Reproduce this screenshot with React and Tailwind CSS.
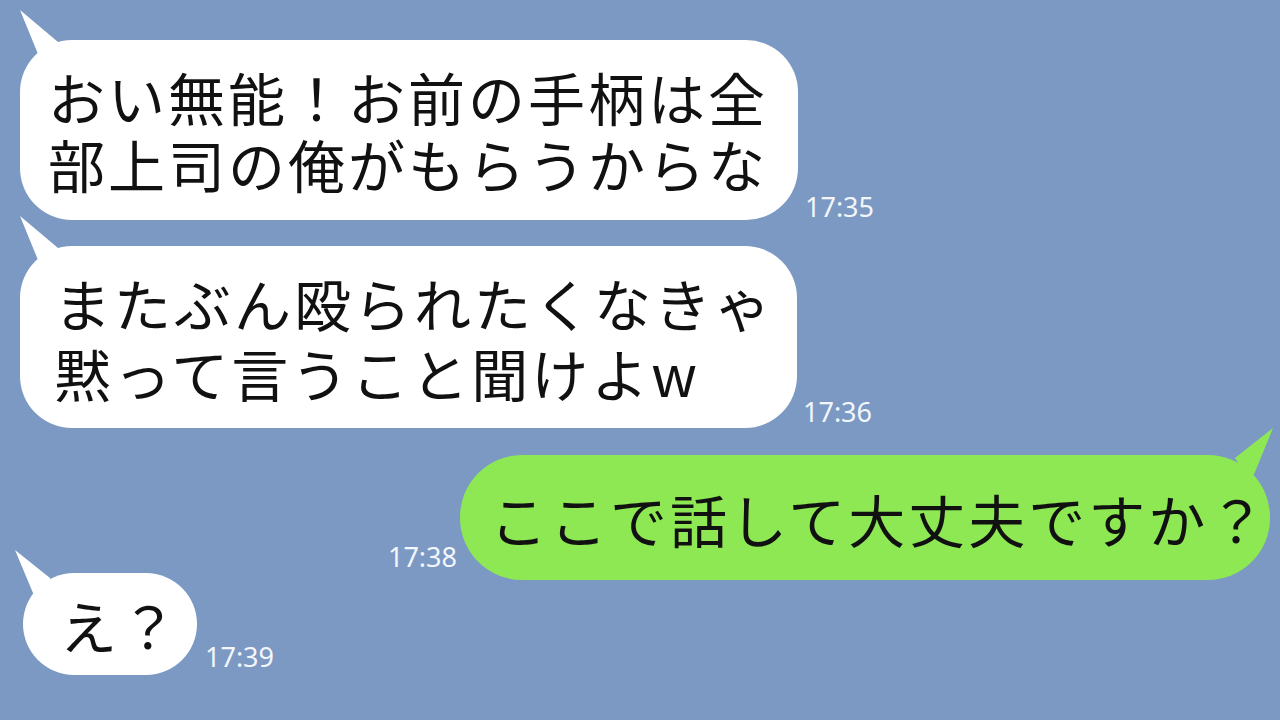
import React from "react";

const jp = { fontFamily: '"Noto Sans CJK JP", "Noto Sans", sans-serif' };
const num = { fontFamily: '"Noto Sans", "Liberation Sans", sans-serif' };

function Time({ children, className }) {
  return (
    <span style={num} className={"text-[27px] leading-none text-[#f3f6fb] " + className}>
      {children}
    </span>
  );
}

function LeftTail({ small }) {
  // drawn over the bubble's top-left corner
  return small ? (
    <svg className="absolute -left-[8px] -top-[23px]" width="60" height="60" viewBox="0 0 60 60">
      <polygon points="0,0 35,28 35,52 18,43" fill="#ffffff" />
    </svg>
  ) : (
    <svg className="absolute left-0 -top-[30px]" width="70" height="70" viewBox="0 0 70 70">
      <polygon points="0,0 38,32 42,62 18,44" fill="#ffffff" />
    </svg>
  );
}

export default function App() {
  return (
    <div className="w-[1280px] h-[720px] bg-[#7b99c3] overflow-hidden flex flex-col pt-[40px]" style={jp}>
      {/* message 1 */}
      <div className="flex items-end pl-[20px]">
        <div className="relative w-[778px] h-[180px] bg-white rounded-[52px] flex items-center pl-[28px]">
          <LeftTail />
          <p className="relative text-[57px] leading-[67px] tracking-[3px] text-[#111] whitespace-nowrap">
            おい無能！お前の手柄は全
            <br />
            部上司の俺がもらうからな
          </p>
        </div>
        <Time className="ml-[7px] mb-0">17:35</Time>
      </div>

      {/* message 2 */}
      <div className="flex items-end pl-[20px] mt-[26px]">
        <div className="relative w-[777px] h-[182px] bg-white rounded-[52px] flex items-center pl-[34px]">
          <LeftTail />
          <p className="relative text-[57px] leading-[70px] tracking-[3px] text-[#111] whitespace-nowrap">
            またぶん殴られたくなきゃ
            <br />
            黙って言うこと聞けよw
          </p>
        </div>
        <Time className="ml-[6px] mb-[3px]">17:36</Time>
      </div>

      {/* my message */}
      <div className="flex items-end justify-end pr-[10px] mt-[27px]">
        <Time className="mr-[3px] mb-[10px]">17:38</Time>
        <div className="relative w-[810px] h-[125px] bg-[#8de854] rounded-[62px] flex items-center pl-[30px]">
          <svg className="absolute -right-[5px] -top-[28px]" width="60" height="60" viewBox="0 0 60 60">
            <polygon points="58,1 20,31 35,55 40,45" fill="#8de854" />
          </svg>
          <p className="relative text-[57px] leading-[70px] tracking-[3px] text-[#111] whitespace-nowrap">
            ここで話して大丈夫ですか？
          </p>
        </div>
      </div>

      {/* message 3 */}
      <div className="flex items-end pl-[23px] -mt-[7px]">
        <div className="relative w-[174px] h-[102px] bg-white rounded-[51px] flex items-center pl-[37px]">
          <LeftTail small />
          <p className="relative text-[57px] leading-[70px] tracking-[3px] text-[#111] whitespace-nowrap">
            え？
          </p>
        </div>
        <Time className="ml-[8px] mb-[5px]">17:39</Time>
      </div>
    </div>
  );
}
